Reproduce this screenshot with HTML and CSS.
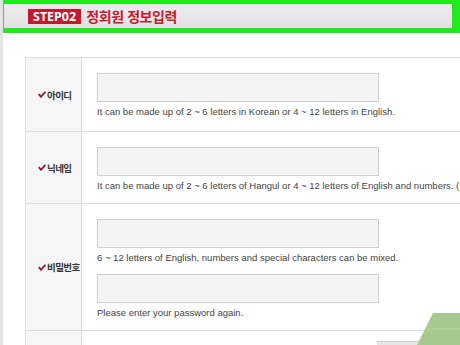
FILE: index.html
```html
<!DOCTYPE html>
<html lang="ko">
<head>
    <meta charset="UTF-8">
    <title>정회원 정보입력</title>
    <link rel="stylesheet" href="styles.css">
</head>
<body>
    <div class="page">
        <div class="stepBar">
            <span class="stepBadge">STEP02</span>
            <span class="stepTitle">정회원 정보입력</span>
        </div>

        <div class="joinForm">
            <div class="formRow firstRow">
                <div class="formLabel"><svg class="check" width="8" height="7" viewBox="0 0 8 7"><path d="M0.8 3.2 L3 5.8 L7.4 0.8" fill="none" stroke="#8e1b35" stroke-width="1.8"/></svg>아이디</div>
                <div class="formValue">
                    <div class="field">
                        <div class="inputBox"></div>
                        <p class="help">It can be made up of 2 ~ 6 letters in Korean or 4 ~ 12 letters in English.</p>
                    </div>
                </div>
            </div>
            <div class="formRow">
                <div class="formLabel"><svg class="check" width="8" height="7" viewBox="0 0 8 7"><path d="M0.8 3.2 L3 5.8 L7.4 0.8" fill="none" stroke="#8e1b35" stroke-width="1.8"/></svg>닉네임</div>
                <div class="formValue">
                    <div class="field">
                        <div class="inputBox"></div>
                        <p class="help">It can be made up of 2 ~ 6 letters of Hangul or 4 ~ 12 letters of English and numbers. (</p>
                    </div>
                </div>
            </div>
            <div class="formRow">
                <div class="formLabel"><svg class="check" width="8" height="7" viewBox="0 0 8 7"><path d="M0.8 3.2 L3 5.8 L7.4 0.8" fill="none" stroke="#8e1b35" stroke-width="1.8"/></svg>비밀번호</div>
                <div class="formValue">
                    <div class="field">
                        <div class="inputBox"></div>
                        <p class="help">6 ~ 12 letters of English, numbers and special characters can be mixed.</p>
                    </div>
                    <div class="field">
                        <div class="inputBox"></div>
                        <p class="help">Please enter your password again.</p>
                    </div>
                </div>
            </div>
            <div class="formRow lastRow">
                <div class="formLabel"></div>
                <div class="formValue"></div>
            </div>
        </div>

        <div class="cornerBar"></div>
        <svg class="cornerShape" width="60" height="40" viewBox="0 0 60 40">
            <polygon points="33,8 60,8 60,40 17,40" fill="#a6c98f"/>
            <line x1="25" y1="24" x2="60" y2="24" stroke="#b8d4a3" stroke-width="1"/>
        </svg>
    </div>
</body>
</html>
```

FILE: styles.css
```css
body {
    margin: 0;
    padding: 0;
    width: 460px;
    height: 345px;
    overflow: hidden;
    background: #e4e4e4;
    font-family: Arial, "Liberation Sans", "Noto Sans CJK KR", sans-serif;
}

.page {
    position: relative;
    margin-left: 3px;
    height: 345px;
    background: #fff;
    overflow: hidden;
}

.stepBar {
    margin-left: -3px;
    height: 24px;
    border-style: solid;
    border-color: #1eea1e;
    border-width: 4px 8px 5px 4px;
    background: linear-gradient(#ececee, #e2e2e4);
    display: flex;
    align-items: center;
    gap: 5px;
    padding-left: 24px;
}

.stepBadge {
    background: #c4182c;
    color: #fff;
    font-family: "Noto Sans", "Liberation Sans", sans-serif;
    font-weight: bold;
    font-size: 12.5px;
    line-height: 15px;
    padding: 0 5px;
}

.stepTitle {
    color: #c61a2e;
    font-family: "Noto Sans CJK KR", sans-serif;
    font-weight: bold;
    font-size: 14px;
    letter-spacing: -0.4px;
}

.joinForm {
    margin: 24px 0 0 22px;
    width: 520px;
    border-top: 1px solid #dcdcdc;
    border-left: 1px solid #dcdcdc;
}

.formRow {
    display: flex;
    border-bottom: 1px solid #dcdcdc;
}

.formLabel {
    width: 56px;
    flex-shrink: 0;
    background: #f6f6f6;
    border-right: 1px solid #dcdcdc;
    display: flex;
    align-items: center;
    padding-left: 12px;
    box-sizing: border-box;
    font-family: "Noto Sans CJK KR", sans-serif;
    font-weight: bold;
    font-size: 9.5px;
    color: #333;
    letter-spacing: -0.6px;
}

.check {
    margin-right: 1px;
    flex-shrink: 0;
}

.formValue {
    flex: 1;
    padding: 15px 0 11px 15px;
    display: flex;
    flex-direction: column;
    gap: 10px;
}

.firstRow .formValue {
    padding-bottom: 13px;
}

.inputBox {
    width: 280px;
    height: 27px;
    border: 1px solid #cfcfcf;
    background: #f4f4f4;
}

.help {
    margin: 4px 0 0;
    font-size: 9.5px;
    line-height: 12px;
    color: #444;
    white-space: nowrap;
}

.lastRow {
    height: 30px;
    border-bottom: none;
}

.cornerBar {
    position: absolute;
    left: 374px;
    top: 341px;
    width: 90px;
    height: 4px;
    background: #e6e6e6;
    border-top: 1px solid #cfcfcf;
}

.cornerShape {
    position: absolute;
    left: 397px;
    top: 305px;
}
```
